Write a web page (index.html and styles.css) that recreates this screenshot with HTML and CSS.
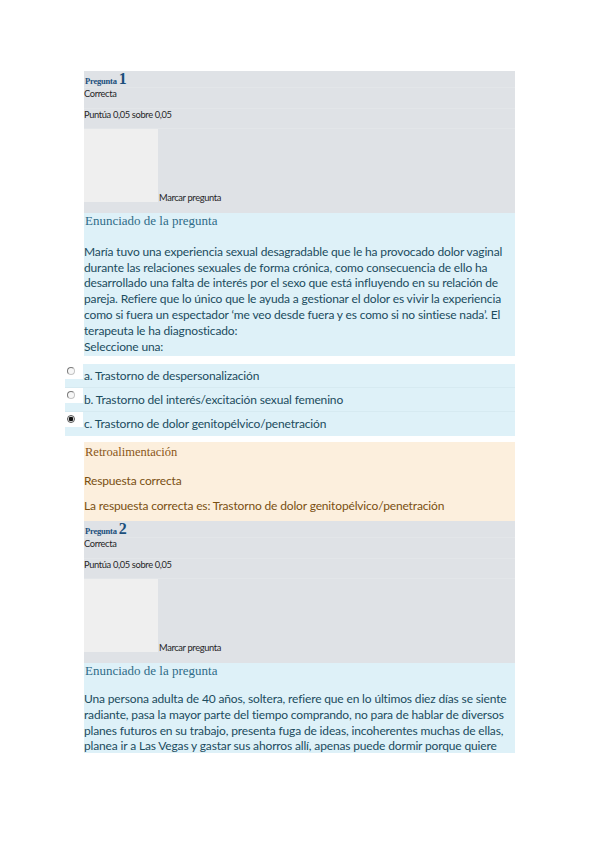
FILE: index.html
```html
<!DOCTYPE html>
<html lang="es">
<head>
<meta charset="utf-8">
<title>Preguntas</title>
<link rel="stylesheet" href="styles.css">
</head>
<body>
<div class="page">
  <div class="que">
    <div class="info">
      <div class="row qno"><span class="lbl">Pregunta</span><span class="num">1</span></div>
      <div class="row state">Correcta</div>
      <div class="row grade">Puntúa 0,05 sobre 0,05</div>
      <div class="row flag"><span class="ph"></span><span class="flagtxt">Marcar pregunta</span></div>
    </div>
    <div class="content">
      <h4 class="enun">Enunciado de la pregunta</h4>
      <p class="qtext">María tuvo una experiencia sexual desagradable que le ha provocado dolor vaginal<br>durante las relaciones sexuales de forma crónica, como consecuencia de ello ha<br>desarrollado una falta de interés por el sexo que está influyendo en su relación de<br>pareja. Refiere que lo único que le ayuda a gestionar el dolor es vivir la experiencia<br>como si fuera un espectador ‘me veo desde fuera y es como si no sintiese nada’. El<br>terapeuta le ha diagnosticado:</p>
      <p class="prompt">Seleccione una:</p>
    </div>
    <div class="answers">
      <div class="opt"><span class="radio"><span class="dot"></span></span><span class="otext">a. Trastorno de despersonalización</span></div>
      <div class="opt"><span class="radio"><span class="dot"></span></span><span class="otext">b. Trastorno del interés/excitación sexual femenino</span></div>
      <div class="opt"><span class="radio"><span class="dot on"></span></span><span class="otext">c. Trastorno de dolor genitopélvico/penetración</span></div>
    </div>
    <div class="feedback">
      <h4 class="fbh">Retroalimentación</h4>
      <p class="fbt">Respuesta correcta</p>
      <p class="fbt">La respuesta correcta es: Trastorno de dolor genitopélvico/penetración</p>
    </div>
  </div>
  <div class="que">
    <div class="info">
      <div class="row qno"><span class="lbl">Pregunta</span><span class="num">2</span></div>
      <div class="row state">Correcta</div>
      <div class="row grade">Puntúa 0,05 sobre 0,05</div>
      <div class="row flag"><span class="ph"></span><span class="flagtxt">Marcar pregunta</span></div>
    </div>
    <div class="content last">
      <h4 class="enun">Enunciado de la pregunta</h4>
      <p class="qtext q2">Una persona adulta de 40 años, soltera, refiere que en lo últimos diez días se siente<br>radiante, pasa la mayor parte del tiempo comprando, no para de hablar de diversos<br>planes futuros en su trabajo, presenta fuga de ideas, incoherentes muchas de ellas,<br>planea ir a Las Vegas y gastar sus ahorros allí, apenas puede dormir porque quiere</p>
    </div>
  </div>
</div>
</body>
</html>
```

FILE: styles.css
```css
html, body {
  margin: 0;
  padding: 0;
  background: #ffffff;
}
body {
  width: 599px;
  height: 848px;
  overflow: hidden;
  font-family: Lato, "Open Sans", sans-serif;
}
.page {
  padding-top: 71px;
  margin-left: 84px;
  width: 431px;
}
.info {
  background: #dfe2e6;
  padding-bottom: 11px;
}
.row {
  border-bottom: 1px solid #e3e6e9;
  box-sizing: border-box;
  font-size: 9.3px;
  color: #262626;
  letter-spacing: -0.35px;
}
.qno {
  height: 17px;
  display: flex;
  align-items: flex-end;
  padding-left: 1px;
  font-family: "Liberation Serif", serif;
  color: #1b4f7c;
  letter-spacing: 0;
}
.lbl {
  font-size: 8.5px;
  font-weight: bold;
  margin-right: 2px;
  line-height: 12px;
  letter-spacing: -0.2px;
}
.num {
  font-size: 16px;
  font-weight: bold;
  line-height: 16px;
}
.state {
  height: 21px;
  line-height: 11px;
}
.grade {
  height: 20px;
  line-height: 11px;
  padding-top: 0;
}
.flag {
  height: 73px;
  border-bottom: none;
  display: flex;
  align-items: flex-end;
}
.ph {
  width: 74px;
  height: 73px;
  background: #efefef;
}
.flagtxt {
  line-height: 10px;
  margin-bottom: -1px;
  padding-left: 1px;
}
.content {
  background: #def1f8;
  padding-bottom: 1px;
}
.content.last {
  height: 90px;
  padding-bottom: 0;
  overflow: hidden;
}
.enun {
  margin: 0;
  padding-left: 1px;
  height: 16px;
  line-height: 16px;
  font-family: "Liberation Serif", serif;
  font-weight: normal;
  font-size: 13px;
  color: #2f6c88;
}
.qtext {
  margin: 15px 0 0 0;
  font-size: 12px;
  line-height: 15.7px;
  color: #1b4c5e;
  white-space: nowrap;
  letter-spacing: -0.15px;
}
.qtext.q2 {
  margin-top: 12px;
}
.prompt {
  margin: 1px 0 0 0;
  height: 16px;
  line-height: 16px;
  font-size: 12px;
  color: #1b4c5e;
  letter-spacing: -0.15px;
}
.answers {
  margin: 8px 0 6px -19px;
  width: 450px;
}
.opt {
  display: flex;
  align-items: flex-start;
  height: 24px;
  background: #def1f8;
  border-bottom: 1px solid #d6eaf1;
  box-sizing: border-box;
}
.opt:last-child {
  border-bottom: none;
}
.radio {
  width: 18px;
  height: 15px;
  background: #ffffff;
  position: relative;
  flex: none;
}
.dot {
  position: absolute;
  left: 2px;
  top: 3px;
  width: 6px;
  height: 6px;
  border-radius: 50%;
  border: 1px solid #c4c4c4;
  border-left-color: #7a7a7a;
  border-top-color: #7a7a7a;
  background: #f7f7f7;
}
.dot.on {
  background: radial-gradient(circle, #111 0 2px, #f4f4f4 2.6px);
  border-color: #555;
}
.otext {
  padding-left: 1px;
  line-height: 24px;
  font-size: 12px;
  color: #1b4c5e;
  letter-spacing: -0.15px;
}
.feedback {
  background: #fcefdd;
  height: 79px;
  box-sizing: border-box;
  padding-top: 2px;
}
.fbh {
  margin: 0;
  padding-left: 1px;
  height: 16px;
  line-height: 16px;
  font-family: "Liberation Serif", serif;
  font-weight: normal;
  font-size: 12.5px;
  color: #8a5718;
}
.fbt {
  margin: 13px 0 0 0;
  line-height: 16px;
  font-size: 12px;
  color: #7a5012;
  letter-spacing: -0.15px;
}
.fbt + .fbt {
  margin-top: 9px;
}
```
